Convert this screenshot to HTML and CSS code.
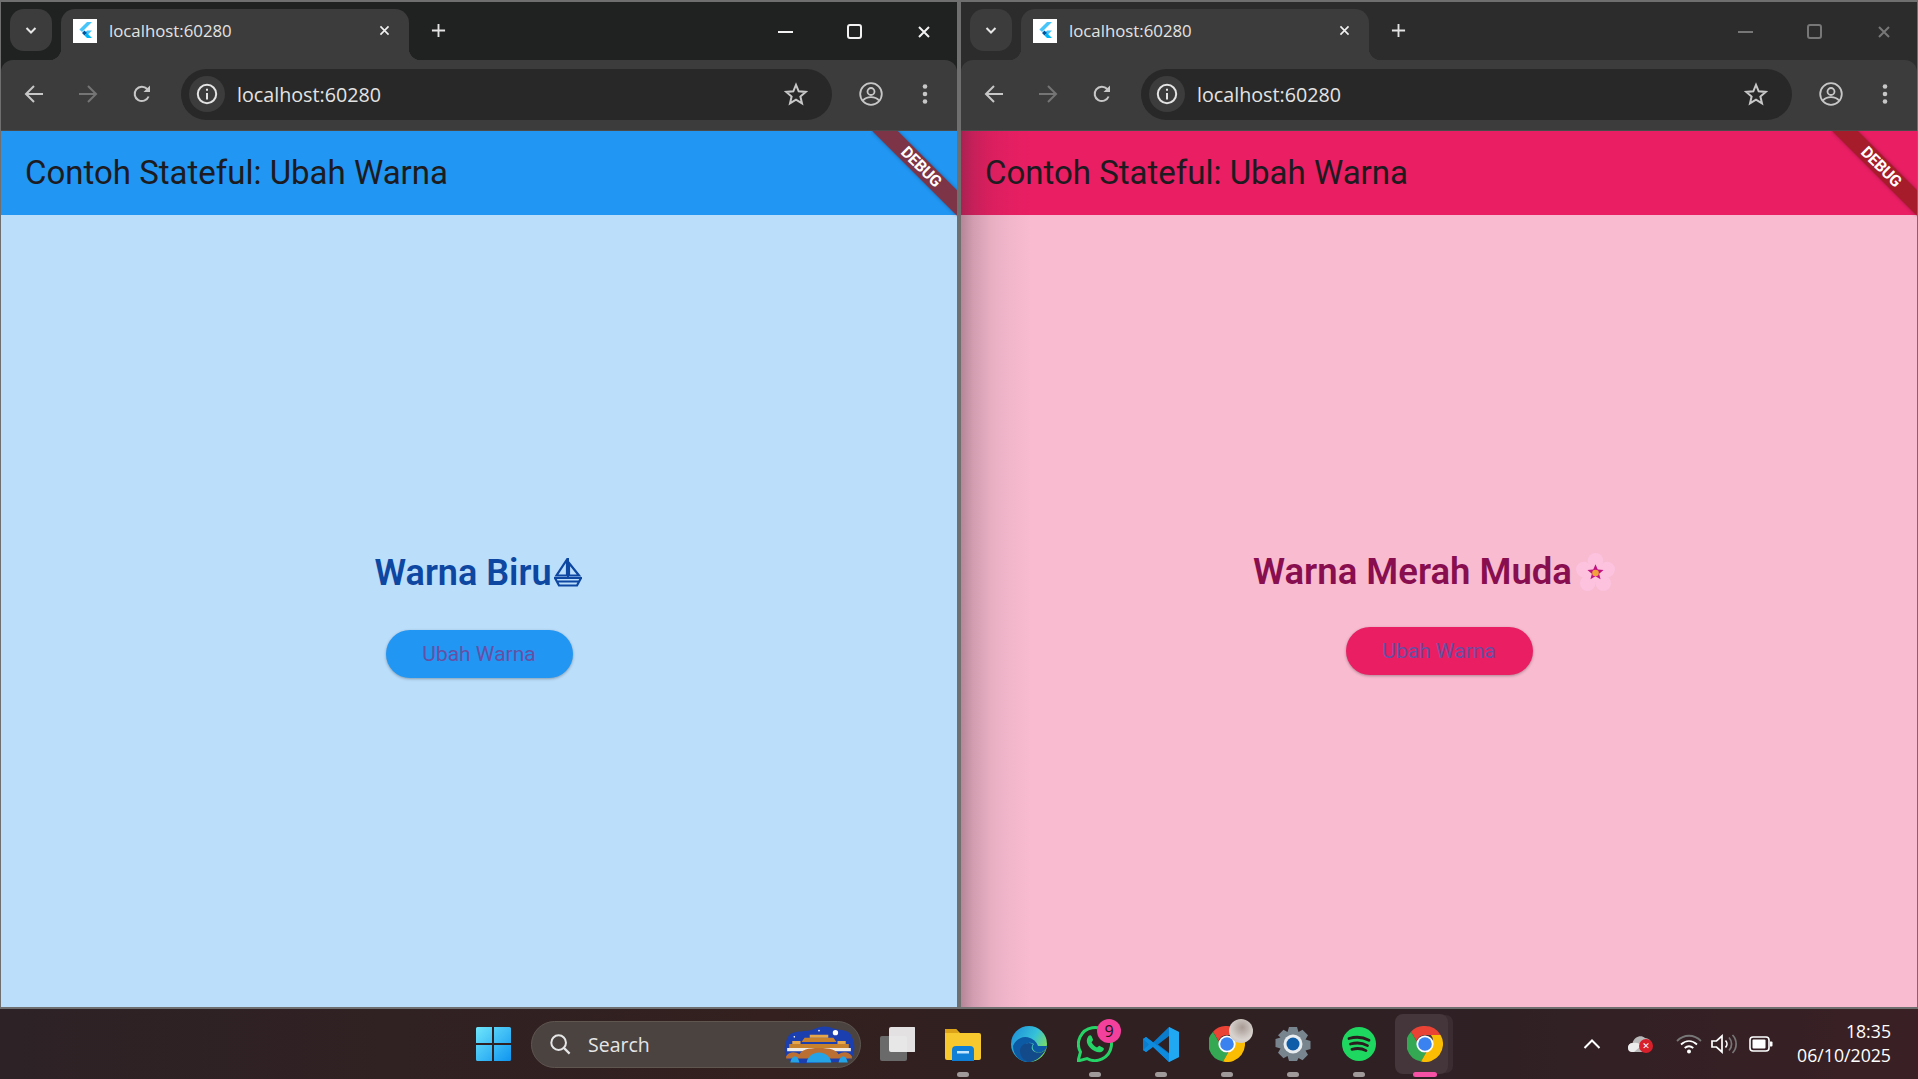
FILE: index.html
```html
<!DOCTYPE html>
<html>
<head>
    <title>localhost:60280</title>
    <link rel="stylesheet" href="styles.css">
</head>
<body>
    <!-- icons used in both windows and twice in the taskbar -->
    <svg class="defs" width="0" height="0">
        <symbol id="i-flutter" viewBox="0 0 24 24">
            <rect width="24" height="24" fill="#fff"/>
            <path d="M14 3h5l-10 10-2.600-2.500z" fill="#47c5fb"/>
            <path d="M14 11.500h5l-5 5 -2.500-2.500z" fill="#47c5fb"/>
            <path d="M9 14l2.500-2.500 2.500 2.500-2.500 2.500z" fill="#00569e"/>
            <path d="M11.500 16.500l2.500-2.500 5 5h-5z" fill="#00b5f8"/>
        </symbol>
        <symbol id="i-down" viewBox="0 0 16 16"><path d="M3.500 6l4.500 4.500L12.500 6" fill="none" stroke="currentColor" stroke-width="2"/></symbol>
        <symbol id="i-close" viewBox="0 0 16 16"><path d="M3 3l10 10M13 3L3 13" stroke="currentColor" stroke-width="2"/></symbol>
        <symbol id="i-plus" viewBox="0 0 16 16"><path d="M8 1v14M1 8h14" stroke="currentColor" stroke-width="2"/></symbol>
        <symbol id="i-back" viewBox="0 0 20 20"><path d="M19 10H2.500M10 2l-8 8 8 8" fill="none" stroke="currentColor" stroke-width="2"/></symbol>
        <symbol id="i-forward" viewBox="0 0 20 20"><path d="M1 10h16.500M10 2l8 8-8 8" fill="none" stroke="currentColor" stroke-width="2"/></symbol>
        <symbol id="i-reload" viewBox="0 0 20 20"><path d="M16.600 12.500A7.200 7.200 0 1 1 15.200 5L17 7" fill="none" stroke="currentColor" stroke-width="2"/><path d="M18 1.500V8h-6.500z" fill="currentColor"/></symbol>
        <symbol id="i-info" viewBox="0 0 22 22"><circle cx="11" cy="11" r="9.200" fill="none" stroke="currentColor" stroke-width="2"/><path d="M10 10h2v6.500h-2zM10 5.800h2v2h-2z" fill="currentColor"/></symbol>
        <symbol id="i-star" viewBox="0 0 24 24"><path d="M12 2.800l2.700 6.500 7 .6-5.300 4.600 1.600 6.900-6-3.700-6 3.700 1.600-6.900L2.300 9.900l7-.6z" fill="none" stroke="currentColor" stroke-width="2"/></symbol>
        <symbol id="i-profile" viewBox="0 0 24 24"><circle cx="12" cy="12" r="10.800" fill="none" stroke="currentColor" stroke-width="1.800"/><circle cx="12" cy="9.500" r="3.500" fill="none" stroke="currentColor" stroke-width="1.800"/><path d="M4 18.500c2-2.500 5-3.300 8-3.300s6 .8 8 3.300" fill="none" stroke="currentColor" stroke-width="1.800"/></symbol>
        <symbol id="i-menu" viewBox="0 0 6 22"><circle cx="3" cy="3.500" r="2.300" fill="currentColor"/><circle cx="3" cy="11" r="2.300" fill="currentColor"/><circle cx="3" cy="18.500" r="2.300" fill="currentColor"/></symbol>
        <symbol id="i-chrome" viewBox="0 0 36 36">
            <path d="M18 0a18 18 0 0 1 15.600 9H18a9 9 0 0 0-8.500 6L4 5.700A18 18 0 0 1 18 0z" fill="#ea4335"/>
            <path d="M4 5.700L11.800 19a9 9 0 0 0 7.400 7.900L14 35.600A18 18 0 0 1 4 5.700z" fill="#34a853"/>
            <path d="M33.600 9A18 18 0 0 1 14 35.600l7.800-13.500A9 9 0 0 0 24 9z" fill="#fbbc04"/>
            <circle cx="18" cy="18" r="8.600" fill="#fff"/>
            <circle cx="18" cy="18" r="6.800" fill="#3b82f1"/>
        </symbol>
    </svg>

    <div class="screen">
        <div class="windows">
            <section class="window">
                <div class="tabstrip">
                    <button class="tab-search"><svg class="ic16"><use href="#i-down"/></svg></button>
                    <div class="tab">
                        <svg class="favicon"><use href="#i-flutter"/></svg>
                        <span class="tab-title">localhost:60280</span>
                        <svg class="ic-tabclose"><use href="#i-close"/></svg>
                    </div>
                    <svg class="ic-newtab"><use href="#i-plus"/></svg>
                    <div class="win-controls">
                        <span class="wc-min"></span>
                        <span class="wc-max"></span>
                        <svg class="wc-close"><use href="#i-close"/></svg>
                    </div>
                </div>
                <div class="toolbar">
                    <svg class="nav-ic"><use href="#i-back"/></svg>
                    <svg class="nav-ic nav-off"><use href="#i-forward"/></svg>
                    <svg class="nav-ic"><use href="#i-reload"/></svg>
                    <div class="omnibox">
                        <span class="site-info"><svg class="ic22"><use href="#i-info"/></svg></span>
                        <span class="url">localhost:60280</span>
                        <svg class="ic-star"><use href="#i-star"/></svg>
                    </div>
                    <svg class="ic-profile"><use href="#i-profile"/></svg>
                    <svg class="ic-menu"><use href="#i-menu"/></svg>
                </div>
                <div class="app app-blue">
                    <header class="appbar">Contoh Stateful: Ubah Warna</header>
                    <div class="debug-corner"><span class="debug-ribbon">DEBUG</span></div>
                    <main class="app-body">
                        <h1 class="color-name">Warna Biru<svg class="boat" viewBox="0 0 30 30"><path d="M14 1.500v16H3.500zM16 5l10 12.500H16zM1 20h28M2 20l4 7.500h18l4-7.500M3.500 23.500h23" fill="none" stroke="currentColor" stroke-width="2.200"/><path d="M15 0v20" stroke="currentColor" stroke-width="2"/></svg></h1>
                        <button class="change-btn">Ubah Warna</button>
                    </main>
                </div>
            </section>

            <section class="window window-back">
                <div class="tabstrip">
                    <button class="tab-search"><svg class="ic16"><use href="#i-down"/></svg></button>
                    <div class="tab">
                        <svg class="favicon"><use href="#i-flutter"/></svg>
                        <span class="tab-title">localhost:60280</span>
                        <svg class="ic-tabclose"><use href="#i-close"/></svg>
                    </div>
                    <svg class="ic-newtab"><use href="#i-plus"/></svg>
                    <div class="win-controls">
                        <span class="wc-min"></span>
                        <span class="wc-max"></span>
                        <svg class="wc-close"><use href="#i-close"/></svg>
                    </div>
                </div>
                <div class="toolbar">
                    <svg class="nav-ic"><use href="#i-back"/></svg>
                    <svg class="nav-ic nav-off"><use href="#i-forward"/></svg>
                    <svg class="nav-ic"><use href="#i-reload"/></svg>
                    <div class="omnibox">
                        <span class="site-info"><svg class="ic22"><use href="#i-info"/></svg></span>
                        <span class="url">localhost:60280</span>
                        <svg class="ic-star"><use href="#i-star"/></svg>
                    </div>
                    <svg class="ic-profile"><use href="#i-profile"/></svg>
                    <svg class="ic-menu"><use href="#i-menu"/></svg>
                </div>
                <div class="app app-pink">
                    <header class="appbar">Contoh Stateful: Ubah Warna</header>
                    <div class="debug-corner"><span class="debug-ribbon">DEBUG</span></div>
                    <main class="app-body">
                        <h1 class="color-name">Warna Merah Muda<svg class="flower" viewBox="0 0 40 40">
                            <g fill="#fcc2de"><circle cx="20" cy="8" r="8"/><circle cx="32" cy="17" r="8"/><circle cx="28" cy="31" r="8"/><circle cx="12" cy="31" r="8"/><circle cx="8" cy="17" r="8"/><circle cx="20" cy="20" r="10"/></g>
                            <path d="M20 11.500l2.300 5.500 6 .4-4.600 3.800 1.500 5.800-5.200-3.200-5.200 3.200 1.500-5.800-4.600-3.800 6-.4z" fill="#c2127f"/>
                            <circle cx="20" cy="20.500" r="3.400" fill="#f2a23a"/>
                        </svg></h1>
                        <button class="change-btn">Ubah Warna</button>
                    </main>
                </div>
            </section>
        </div>

        <footer class="taskbar">
            <div class="slot">
                <svg width="36" height="36" viewBox="0 0 36 36">
                    <defs><linearGradient id="win-grad" x1="0" y1="0" x2="1" y2="1"><stop offset="0" stop-color="#6fe6fb"/><stop offset="1" stop-color="#0f95f0"/></linearGradient></defs>
                    <path d="M1 2.500A1.500 1.500 0 0 1 2.500 1H17v16H1zM19 1h15.500A1.500 1.500 0 0 1 36 2.500V17H19zM1 19h16v16H2.500A1.500 1.500 0 0 1 1 33.500zM19 19h17v14.500a1.500 1.500 0 0 1-1.500 1.500H19z" fill="url(#win-grad)"/>
                </svg>
            </div>
            <div class="search">
                <svg class="search-ic" viewBox="0 0 24 24"><circle cx="10.500" cy="10.500" r="8" fill="none" stroke="currentColor" stroke-width="2.200"/><path d="M16.500 16.500l6 6" stroke="currentColor" stroke-width="2.400"/></svg>
                <span class="search-text">Search</span>
                <svg class="search-art" viewBox="0 0 72 38">
                    <path d="M6 12C10 5 22 8 30 5c8-4 14-4 20-1 8 2 16 1 18 8 4 8 3 18-2 22-8 4-18 2-30 3-12 1-24 2-30-3C1 29 2 19 6 12z" fill="#1c3fb0"/>
                    <circle cx="52" cy="8" r="2.600" fill="#fff"/>
                    <circle cx="36" cy="6" r=".8" fill="#fff"/>
                    <circle cx="12" cy="12" r=".8" fill="#fff"/>
                    <path d="M22 13h28l3 4H19zM7 19h58v4H7z" fill="#c7812c"/>
                    <path d="M27 10h18v3H27zM10 16h8v3h-8zM54 16h8v3h-8z" fill="#e7a648"/>
                    <path d="M5 23h62v3H5z" fill="#f3ece2"/>
                    <path d="M4 31c3-5 9-5 13-2 2-4 8-6 19-6s17 2 19 6c4-3 10-3 13 2v2H4z" fill="#bb6f33"/>
                    <path d="M8 37c2-8 7-8 9 0zM24 37c2-13 22-13 24 0zM55 37c2-8 7-8 9 0z" fill="#24a4e6"/>
                </svg>
            </div>
            <div class="slot slot-task">
                <svg width="36" height="36" viewBox="0 0 36 36">
                    <rect x="1" y="10" width="27" height="25" rx="2" fill="#6a6a6a"/>
                    <rect x="10" y="1" width="27" height="25" rx="2" fill="#f2f2f2" fill-opacity=".92"/>
                </svg>
            </div>
            <div class="slot running">
                <svg width="36" height="36" viewBox="0 0 36 36">
                    <path d="M0 5a2 2 0 0 1 2-2h9l4 4h19a2 2 0 0 1 2 2v23a2 2 0 0 1-2 2H2a2 2 0 0 1-2-2z" fill="#f7c92f"/>
                    <path d="M0 3h11l3 4H0z" fill="#dda318"/>
                    <path d="M7 24a4 4 0 0 1 4-4h14a4 4 0 0 1 4 4v11H7z" fill="#0f7fd6"/>
                    <path d="M12 25h12v2.500H12z" fill="#bfe5ff"/>
                </svg>
            </div>
            <div class="slot">
                <svg width="36" height="36" viewBox="0 0 36 36">
                    <defs><linearGradient id="edge-grad" x1="0" y1="0" x2="1" y2=".6"><stop offset="0" stop-color="#1b8ad8"/><stop offset=".6" stop-color="#35c1d9"/><stop offset="1" stop-color="#7fe05a"/></linearGradient></defs>
                    <circle cx="18" cy="18" r="18" fill="url(#edge-grad)"/>
                    <path d="M36 20c-1 5-7 8-11 6-4-2-4-6-2-8-5-3-12 0-12 7 0 5 4 10 9 11-10 1-18-6-18-16 3-7 10-11 17-8 5 2 7 5 8 8h9z" fill="#0c59a4"/>
                    <path d="M36 21c-1 3-3 6-6 9-4 4-9 6-12 6-5-1-9-6-9-11 0-6 7-10 13-7-2 3-2 6 2 8 4 2 10 0 12-5z" fill="#134a8a"/>
                </svg>
            </div>
            <div class="slot running">
                <svg width="36" height="36" viewBox="0 0 36 36">
                    <path d="M1 35l2.500-9A16.500 16.500 0 1 1 10 32.500z" fill="none" stroke="#25d366" stroke-width="3"/>
                    <path d="M11.500 10c1-1 2.500-1.200 3 0l1.500 3.500c.3.800-1 2-1.500 2.800 1.200 2.300 3 4 5.500 5.200.8-.6 2-2 2.800-1.600l3.400 1.800c1 .5.800 2-.2 3-2 2-5 2-8.500.2-3.500-1.800-6.500-4.800-7.500-8.200-.6-2.500.2-5 1.500-6.700z" fill="#25d366"/>
                </svg>
                <span class="badge">9</span>
            </div>
            <div class="slot running">
                <svg width="37" height="37" viewBox="0 0 37 37">
                    <path d="M26 1l10 5v25l-10 5-16-15.500L3 26l-3-2v-11l3-2 7 5.500z" fill="#0a7ccb"/>
                    <path d="M26 1l10 5v25l-10 5z" fill="#21a8f3"/>
                    <path d="M26 10v17l-11-8.500z" fill="#2e2125"/>
                    <path d="M0 13l3-2 23 17v8L10 21 3 26l-3-2 6-5.500z" fill="#0f8bdd"/>
                </svg>
            </div>
            <div class="slot running">
                <svg class="slot-chrome"><use href="#i-chrome"/></svg>
                <span class="avatar"></span>
            </div>
            <div class="slot running">
                <svg width="36" height="36" viewBox="0 0 36 36">
                    <path d="M14 1h8l1.500 5 4-2.300 5.500 5.500-2.500 4.300 5 1.500v8l-5 1.500 2.500 4.300-5.500 5.500-4-2.300L22 35h-8l-1.500-5-4 2.300L3 26.800l2.500-4.300-5-1.500v-8l5-1.500L3 9.200l5.500-5.500 4 2.300z" fill="#78848e"/>
                    <circle cx="18" cy="18" r="9.500" fill="#e9edf0"/>
                    <circle cx="18" cy="18" r="6.500" fill="#0f5da8"/>
                </svg>
            </div>
            <div class="slot running">
                <svg width="34" height="34" viewBox="0 0 34 34">
                    <circle cx="17" cy="17" r="17" fill="#1ed760"/>
                    <path d="M7 11.500c7-2 14-1.500 20 1.800M8.500 17c6-1.700 12-1.200 17 1.600M10 22.300c5-1.300 10-1 14 1.300" fill="none" stroke="#2b1c1f" stroke-width="2.800" stroke-linecap="round"/>
                </svg>
            </div>
            <div class="slot slot-active">
                <svg class="slot-chrome"><use href="#i-chrome"/></svg>
            </div>

            <div class="tray">
                <svg class="tray-chevron" viewBox="0 0 18 12"><path d="M1.500 10L9 2.500l7.500 7.500" fill="none" stroke="#fff" stroke-width="2"/></svg>
                <span class="tray-cloud">
                    <svg width="26" height="20" viewBox="0 0 26 20"><path d="M5 18a4.500 4.500 0 0 1-.5-9C6 3 13 0 17 4c4 0 8 4 7 9l-5 5z" fill="#b9b9b9"/><path d="M0 14a4.500 4.500 0 0 1 5-5c3-1 7 0 8 3l-7 6H4a4 4 0 0 1-4-4z" fill="#ececec"/></svg>
                    <span class="cloud-x">✕</span>
                </span>
                <svg class="tray-wifi" viewBox="0 0 26 20">
                    <path d="M1 7c7-7 17-7 24 0" fill="none" stroke="#777" stroke-width="1.800"/>
                    <path d="M5 10.500c5-4.500 11-4.500 16 0M8.700 14c3-2.500 5.600-2.500 8.600 0" fill="none" stroke="#fff" stroke-width="1.800"/>
                    <circle cx="13" cy="17.500" r="2" fill="#fff"/>
                </svg>
                <svg class="tray-sound" viewBox="0 0 26 20">
                    <path d="M1 7h4.500L11 2v16l-5.500-5H1z" fill="none" stroke="#fff" stroke-width="1.700"/>
                    <path d="M14.500 6.500a5 5 0 0 1 0 7" fill="none" stroke="#fff" stroke-width="1.700"/>
                    <path d="M18 3.500a9.500 9.500 0 0 1 0 13M21.500 1a13 13 0 0 1 0 18" fill="none" stroke="#777" stroke-width="1.700"/>
                </svg>
                <svg class="tray-battery" viewBox="0 0 24 16">
                    <rect x="1" y="1" width="19" height="14" rx="3" fill="none" stroke="#fff" stroke-width="1.600"/>
                    <rect x="3.500" y="3.500" width="13" height="9" rx="1" fill="#fff"/>
                    <path d="M21 5.500h1.500a1 1 0 0 1 1 1v3a1 1 0 0 1-1 1H21z" fill="#fff"/>
                </svg>
                <div class="clock">
                    <span>18:35</span>
                    <span>06/10/2025</span>
                </div>
            </div>
        </footer>
    </div>
</body>
</html>
```

FILE: styles.css
```css
* {
    box-sizing: border-box;
}
html, body {
    margin: 0;
    height: 100%;
    overflow: hidden;
}
body {
    background-color: #6f6f6f;
    font-family: "Open Sans", sans-serif;
}
button {
    border: none;
    padding: 0;
    font: inherit;
}
.defs {
    display: block;
    position: absolute;
}
.screen {
    display: flex;
    flex-direction: column;
    height: 1079px;
}
.windows {
    display: flex;
    gap: 4px;
    height: 1007px;
    padding: 2px 1px 0;
    background-color: #6f6f6f;
}
.window {
    display: flex;
    flex-direction: column;
    width: 956px;
    background-color: #202221;
}
.window-back {
    background-color: #2c2c2c;
}

/* browser tabs */
.tabstrip {
    display: flex;
    align-items: flex-start;
    height: 58px;
    padding: 7px 0 0 9px;
    color: #e6e6e6;
}
.tab-search {
    display: flex;
    align-items: center;
    justify-content: center;
    width: 42px;
    height: 42px;
    border-radius: 14px;
    background-color: #3c3c3c;
    color: #e6e6e6;
}
.ic16 {
    width: 16px;
    height: 16px;
}
.tab {
    position: relative;
    display: flex;
    align-items: center;
    width: 348px;
    height: 51px;
    margin-left: 9px;
    padding: 0 16px 8px 12px;
    border-radius: 14px 14px 0 0;
    background-color: #3c3c3c;
}
.tab::before,
.tab::after {
    content: "";
    position: absolute;
    bottom: 0;
    width: 12px;
    height: 12px;
}
.tab::before {
    left: -12px;
    background: radial-gradient(circle at 0 0, transparent 12px, #3c3c3c 12.500px);
}
.tab::after {
    right: -12px;
    background: radial-gradient(circle at 100% 0, transparent 12px, #3c3c3c 12.500px);
}
.favicon {
    width: 24px;
    height: 24px;
    flex-shrink: 0;
}
.tab-title {
    flex: 1;
    margin-left: 12px;
    color: #e3e3e3;
    font-size: 16.800px;
    white-space: nowrap;
}
.ic-tabclose {
    width: 13px;
    height: 13px;
    margin-right: 2px;
    color: #f0f0f0;
}
.ic-newtab {
    width: 15px;
    height: 15px;
    margin: 14px 0 0 22px;
    color: #e3e3e3;
}
.win-controls {
    display: flex;
    align-items: center;
    gap: 54px;
    height: 45px;
    margin-left: auto;
    padding-right: 25px;
}
.wc-min {
    width: 15px;
    height: 2px;
    background-color: #f2f2f2;
}
.wc-max {
    width: 15px;
    height: 15px;
    border: 2px solid #f2f2f2;
    border-radius: 3px;
}
.wc-close {
    width: 16px;
    height: 16px;
    color: #f2f2f2;
}
.window-back .wc-min {
    background-color: #777;
}
.window-back .wc-max {
    border-color: #777;
}
.window-back .wc-close {
    color: #777;
}

/* toolbar */
.toolbar {
    display: flex;
    align-items: center;
    height: 71px;
    padding: 0 0 2px 23px;
    border-bottom: 1px solid #4a4a4a;
    border-radius: 12px 12px 0 0;
    background-color: #3c3c3c;
    color: #c7c7c7;
}
.nav-ic {
    width: 20px;
    height: 20px;
    margin-right: 34px;
}
.nav-off {
    color: #757575;
}
.omnibox {
    display: flex;
    align-items: center;
    width: 651px;
    height: 51px;
    margin-left: -5px;
    padding: 0 24px 0 8px;
    border-radius: 26px;
    background-color: #282828;
}
.site-info {
    display: flex;
    align-items: center;
    justify-content: center;
    width: 36px;
    height: 36px;
    border-radius: 50%;
    background-color: #3c3c3c;
    color: #e3e3e3;
}
.ic22 {
    width: 22px;
    height: 22px;
}
.url {
    flex: 1;
    margin-left: 12px;
    color: #e3e3e3;
    font-size: 19.700px;
    white-space: nowrap;
}
.ic-star {
    width: 24px;
    height: 24px;
    color: #c7c7c7;
}
.ic-profile {
    width: 24px;
    height: 24px;
    margin-left: 27px;
}
.ic-menu {
    width: 6px;
    height: 22px;
    margin-left: 39px;
}

/* flutter app */
.app {
    position: relative;
    display: flex;
    flex-direction: column;
    flex: 1;
    overflow: hidden;
    font-family: Roboto, sans-serif;
}
.app-blue {
    --bar: #2196f3;
    --page: #bbdefb;
    --name: #0d47a1;
}
.app-pink {
    --bar: #e91e63;
    --page: #f8bbd0;
    --name: #880e4f;
}
.app-pink::before {
    content: "";
    position: absolute;
    top: 0;
    left: 0;
    bottom: 0;
    z-index: 2;
    width: 70px;
    background: linear-gradient(90deg, rgba(60, 40, 50, 0.36), rgba(60, 40, 50, 0.2) 18%, rgba(60, 40, 50, 0.09) 42%, rgba(60, 40, 50, 0.03) 70%, rgba(60, 40, 50, 0));
}
.appbar {
    display: flex;
    align-items: center;
    height: 84px;
    padding: 0 0 2px 24px;
    background-color: var(--bar);
    color: #1d1b20;
    font-size: 33px;
    white-space: nowrap;
}
.debug-corner {
    position: absolute;
    top: 0;
    right: 0;
    width: 86px;
    height: 86px;
    overflow: hidden;
}
.debug-ribbon {
    position: absolute;
    top: 27px;
    right: -24px;
    display: block;
    width: 120px;
    height: 18px;
    background-color: rgba(150, 28, 28, 0.8);
    box-shadow: 0 0 4px rgba(0, 0, 0, 0.3);
    color: #fff;
    font-size: 16px;
    font-weight: 700;
    line-height: 18px;
    letter-spacing: -0.3px;
    text-align: center;
    transform: rotate(45deg);
}
.app-body {
    display: flex;
    flex-direction: column;
    align-items: center;
    justify-content: center;
    flex: 1;
    background-color: var(--page);
}
.color-name {
    display: flex;
    align-items: center;
    height: 58px;
    margin: 0 0 28px;
    color: var(--name);
    font-size: 36px;
    font-weight: 600;
    white-space: nowrap;
}
.app-pink .color-name {
    height: 48px;
    margin-bottom: 32px;
    font-size: 36.500px;
}
.boat {
    width: 30px;
    height: 30px;
    margin: 0 0 1px 2px;
}
.flower {
    width: 39px;
    height: 39px;
    margin: 3px 10px 0 4px;
}
.change-btn {
    width: 187px;
    height: 48px;
    border-radius: 24px;
    background-color: var(--bar);
    box-shadow: 0 1px 3px rgba(0, 0, 0, 0.3);
    color: #6750a4;
    font-family: Roboto, sans-serif;
    font-size: 21px;
}

/* windows taskbar */
.taskbar {
    display: flex;
    align-items: center;
    height: 70px;
    margin-top: 2px;
    padding-left: 460px;
    background: linear-gradient(90deg, #2d2226, #33201f 40%, #2e2024 75%, #3a2025);
    color: #fff;
}
.slot {
    position: relative;
    display: flex;
    align-items: center;
    justify-content: center;
    width: 66px;
    height: 70px;
    flex-shrink: 0;
}
.slot-chrome {
    width: 36px;
    height: 36px;
}
.slot-task {
    margin-left: 3px;
}
.running::after,
.slot-active::after {
    content: "";
    position: absolute;
    left: 27px;
    bottom: 2px;
    width: 12px;
    height: 5px;
    border-radius: 3px;
    background-color: #a09a9a;
}
.slot-active::before {
    content: "";
    position: absolute;
    top: 5px;
    left: 3px;
    width: 53px;
    height: 60px;
    border-radius: 8px;
    background-color: #44363a;
    box-shadow: 6px 0 0 -1px #3a2c30;
}
.slot-active svg {
    position: relative;
}
.slot-active::after {
    left: 21px;
    width: 24px;
    background-color: #f552a6;
}
.search {
    display: flex;
    align-items: center;
    width: 330px;
    height: 47px;
    margin-left: 5px;
    padding: 0 4px 0 17px;
    border: 1px solid #5f5650;
    border-radius: 24px;
    background-color: #4a4340;
    color: #e6e6e6;
}
.search-ic {
    width: 22px;
    height: 22px;
}
.search-text {
    margin-left: 17px;
    font-size: 19.500px;
    flex: 1;
}
.search-art {
    width: 74px;
    height: 42px;
}
.badge {
    position: absolute;
    top: 10px;
    left: 35px;
    width: 24px;
    height: 24px;
    border-radius: 50%;
    background-color: #f2409c;
    color: #20141a;
    font-size: 16px;
    line-height: 24px;
    text-align: center;
}
.avatar {
    position: absolute;
    top: 10px;
    left: 35px;
    width: 24px;
    height: 24px;
    border-radius: 50%;
    background: radial-gradient(circle at 55% 35%, #a89a94, #d8d3cf 60%, #c4bfbb);
}
.tray {
    display: flex;
    align-items: center;
    height: 70px;
    margin-left: 125px;
}
.tray-chevron {
    width: 18px;
    height: 12px;
}
.tray-cloud {
    position: relative;
    width: 26px;
    height: 20px;
    margin-left: 27px;
}
.cloud-x {
    position: absolute;
    top: 5px;
    left: 11px;
    width: 14px;
    height: 14px;
    border-radius: 50%;
    background-color: #d81f2c;
    color: #fff;
    font-family: "DejaVu Sans", sans-serif;
    font-size: 9px;
    font-weight: 700;
    line-height: 14px;
    text-align: center;
}
.tray-wifi {
    width: 26px;
    height: 20px;
    margin-left: 22px;
}
.tray-sound {
    width: 26px;
    height: 20px;
    margin-left: 9px;
}
.tray-battery {
    width: 24px;
    height: 16px;
    margin-left: 12px;
}
.clock {
    display: flex;
    flex-direction: column;
    align-items: flex-end;
    gap: 3px;
    width: 104px;
    margin: 0 0 2px 14px;
    font-size: 17.700px;
    line-height: 21px;
}
```
